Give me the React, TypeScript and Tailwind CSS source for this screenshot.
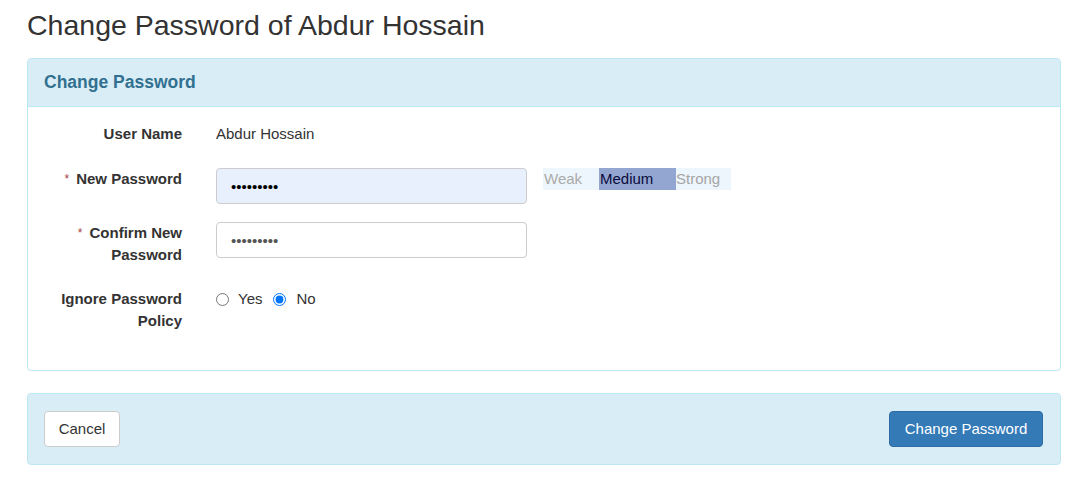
import React from "react";

const Label = ({ required, children }: { required?: boolean; children: React.ReactNode }) => (
  <div className="w-[138px] shrink-0 text-right font-bold leading-[22px] text-[#333]">
    {required && <span className="mr-[7px] text-[12px] font-normal align-top text-[#a94442]">*</span>}
    {children}
  </div>
);

const StrengthMeter = () => (
  <div className="flex h-[22px] w-[188px] bg-[#eef6fd] leading-[22px] text-[15px]">
    <span className="w-[56px] pl-px text-[#aaaaaa]">Weak</span>
    <span className="w-[77px] bg-[#93a6d1] pl-px text-[#0a0a3c]">Medium</span>
    <span className="w-[55px] text-[#a5a5a5]">Strong</span>
  </div>
);

export default function App() {
  return (
    <div className="min-h-screen bg-white pl-[27px] pr-[19px] text-[15px] text-[#333] font-['Liberation_Sans',Arial,sans-serif]">
      <h1 className="pt-[9px] text-[28.5px] leading-[32px] font-normal text-[#333]">Change Password of Abdur Hossain</h1>

      <div className="mt-[17px] rounded-[4px] border border-[#bce8f1] bg-white">
        <div className="h-[48px] rounded-t-[3px] border-b border-[#bce8f1] bg-[#d9edf7] px-[16px] text-[17.5px] font-bold leading-[46px] text-[#31708f]">
          Change Password
        </div>

        <div className="px-[16px] pt-[9px] pb-[38px]">
          <div className="flex h-[36px] items-center gap-[34px]">
            <Label>User Name</Label>
            <span className="leading-[22px]">Abdur Hossain</span>
          </div>

          <div className="mt-[16px] flex items-start gap-[34px]">
            <Label required>New Password</Label>
            <div className="flex items-start gap-[16px]">
              <input
                type="password"
                value="123456789"
                readOnly
                className="h-[36px] w-[311px] rounded-[4px] border border-[#ccc] bg-[#e8f0fe] px-[14px] text-[15px] text-black outline-none"
              />
              <StrengthMeter />
            </div>
          </div>

          <div className="mt-[18px] flex items-start gap-[34px]">
            <Label required>
              Confirm New
              <br />
              Password
            </Label>
            <input
              type="password"
              value="123456789"
              readOnly
              className="h-[36px] w-[311px] rounded-[4px] border border-[#ccc] bg-white px-[14px] text-[15px] text-[#555] outline-none"
            />
          </div>

          <div className="mt-[22px] flex items-start gap-[34px]">
            <Label>
              Ignore Password
              <br />
              Policy
            </Label>
            <div className="flex h-[22px] items-center">
              <input type="radio" name="ignore" className="h-[13px] w-[13px]" />
              <span className="ml-[9px]">Yes</span>
              <input type="radio" name="ignore" defaultChecked className="ml-[11px] h-[13px] w-[13px]" />
              <span className="ml-[10px]">No</span>
            </div>
          </div>
        </div>
      </div>

      <div className="mt-[22px] flex items-center justify-between rounded-[4px] border border-[#bce8f1] bg-[#d9edf7] py-[17px] pl-[16px] pr-[17px]">
        <button className="h-[36px] w-[76px] rounded-[4px] border border-[#ccc] bg-white text-[15px] text-[#333]">
          Cancel
        </button>
        <button className="h-[36px] w-[154px] rounded-[4px] border border-[#2e6da4] bg-[#337ab7] text-[15px] text-white">
          Change Password
        </button>
      </div>
    </div>
  );
}
